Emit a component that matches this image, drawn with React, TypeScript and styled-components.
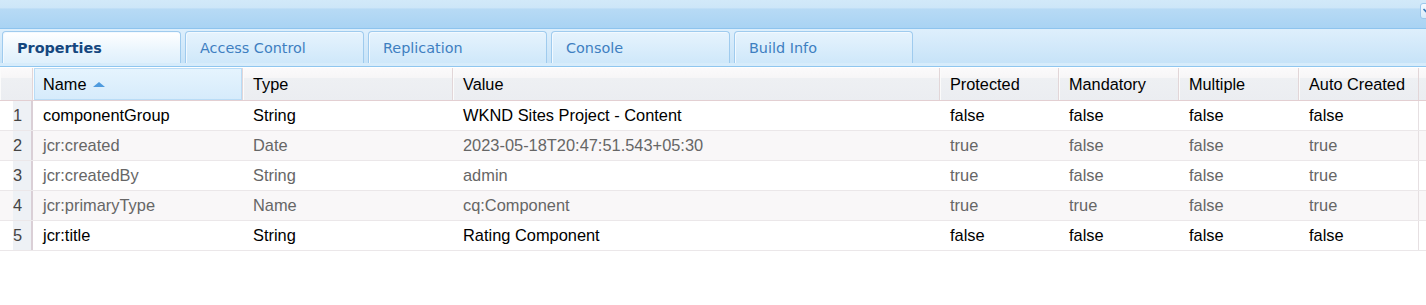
import React from "react";
import styled, { createGlobalStyle } from "styled-components";

const GlobalStyle = createGlobalStyle`
  body {
    margin: 0;
    background: #fff;
    font-family: "Liberation Sans", Arial, sans-serif;
  }
`;

type Row = {
  name: string;
  type: string;
  value: string;
  protectedV: string;
  mandatory: string;
  multiple: string;
  autoCreated: string;
  isProtected: boolean;
};

const rows: Row[] = [
  { name: "componentGroup", type: "String", value: "WKND Sites Project - Content", protectedV: "false", mandatory: "false", multiple: "false", autoCreated: "false", isProtected: false },
  { name: "jcr:created", type: "Date", value: "2023-05-18T20:47:51.543+05:30", protectedV: "true", mandatory: "false", multiple: "false", autoCreated: "true", isProtected: true },
  { name: "jcr:createdBy", type: "String", value: "admin", protectedV: "true", mandatory: "false", multiple: "false", autoCreated: "true", isProtected: true },
  { name: "jcr:primaryType", type: "Name", value: "cq:Component", protectedV: "true", mandatory: "true", multiple: "false", autoCreated: "true", isProtected: true },
  { name: "jcr:title", type: "String", value: "Rating Component", protectedV: "false", mandatory: "false", multiple: "false", autoCreated: "false", isProtected: false },
];

const tabs = ["Properties", "Access Control", "Replication", "Console", "Build Info"];

const columns = [
  { label: "Name", width: 210, sorted: true },
  { label: "Type", width: 210 },
  { label: "Value", width: 487 },
  { label: "Protected", width: 119 },
  { label: "Mandatory", width: 120 },
  { label: "Multiple", width: 120 },
  { label: "Auto Created", width: 120 },
];

const gridCols = `33px ${columns.map((c) => c.width + "px").join(" ")} 1fr`;

export default function App() {
  return (
    <>
      <GlobalStyle />
      <Panel>
        <TopBar>
          <CollapseBtn>
            <svg width="10" height="10" viewBox="0 0 10 10">
              <path d="M1.5 3 L4.5 6 L7.5 3" stroke="#3b78b8" strokeWidth="1.6" fill="none" />
            </svg>
          </CollapseBtn>
        </TopBar>
        <TabStrip>
          {tabs.map((t, i) => (
            <Tab key={t} active={i === 0}>
              {t}
            </Tab>
          ))}
        </TabStrip>
        <Grid>
          <HeaderRow style={{ gridTemplateColumns: gridCols }}>
            <HeadCell />
            {columns.map((c) => (
              <HeadCell key={c.label} sorted={!!c.sorted}>
                {c.label}
                {c.sorted && <SortArrow />}
              </HeadCell>
            ))}
            <HeadFiller />
          </HeaderRow>
          {rows.map((r, i) => (
            <DataRow key={r.name} alt={i % 2 === 1} style={{ gridTemplateColumns: gridCols }}>
              <NumCell>{i + 1}</NumCell>
              {[r.name, r.type, r.value, r.protectedV, r.mandatory, r.multiple, r.autoCreated].map((v, j) => (
                <Cell key={j} muted={r.isProtected}>
                  {v}
                </Cell>
              ))}
              <Filler />
            </DataRow>
          ))}
        </Grid>
      </Panel>
    </>
  );
}

const Panel = styled.div`
  width: 1426px;
  background: #fff;
`;

const TopBar = styled.div`
  position: relative;
  height: 28px;
  background: linear-gradient(to bottom, #d2e9f9 0%, #cde6f8 28%, #b7daf5 32%, #a9d3f3 100%);
  border-bottom: 1px solid #8ec4ee;
`;

const CollapseBtn = styled.div`
  position: absolute;
  right: -8px;
  top: 3px;
  width: 14px;
  height: 16px;
  border: 1px solid #9cc8ec;
  border-radius: 3px;
  background: linear-gradient(to bottom, #f4faff, #d6ebfa);
  display: flex;
  align-items: center;
  padding-left: 1px;
  box-sizing: border-box;
`;

const TabStrip = styled.div`
  display: flex;
  gap: 4px;
  height: 37px;
  padding: 2px 0 0 2px;
  box-sizing: border-box;
  background: linear-gradient(to bottom, #deeffc, #c7e3f8);
  border-bottom: 3px solid #d7ecfb;
  box-shadow: 0 1px 0 #8fc6ef;
  margin-bottom: 2px;
`;

const Tab = styled.div<{ active: boolean }>`
  width: 179px;
  box-sizing: border-box;
  height: 32px;
  padding: 8px 0 0 14px;
  border: 1px solid #9fcbee;
  border-bottom: none;
  border-radius: 4px 4px 0 0;
  box-shadow: inset 1px 1px 0 #f2f9ff;
  font-family: "DejaVu Sans", Verdana, sans-serif;
  font-size: 14.4px;
  font-weight: ${(p) => (p.active ? 700 : 400)};
  color: ${(p) => (p.active ? "#15477f" : "#3e7fc1")};
  background: ${(p) =>
    p.active
      ? "linear-gradient(to bottom, #ffffff, #eaf5fd 60%, #dff0fc)"
      : "linear-gradient(to bottom, #e6f3fd, #cfe8fa)"};
`;

const Grid = styled.div`
  display: flex;
  flex-direction: column;
`;

const HeaderRow = styled.div`
  display: grid;
  height: 33px;
  border-bottom: 1px solid #e3cfd2;
  box-sizing: border-box;
`;

const HeadCell = styled.div<{ sorted?: boolean }>`
  display: flex;
  align-items: center;
  padding-left: 9px;
  font-size: 16.3px;
  color: #000;
  border-right: 1px solid #e2d6d8;
  border-left: 1px solid #fbfbfb;
  background: ${(p) =>
    p.sorted
      ? "linear-gradient(to bottom, #e6f4fe, #d6ebfb)"
      : "linear-gradient(to bottom, #fbfafb 0%, #f7f6f7 30%, #eef0f3 32%, #ebedf1 100%)"};
  ${(p) => (p.sorted ? "box-shadow: inset 0 0 0 1px #b9dcf6;" : "")}
`;

const HeadFiller = styled.div`
  background: linear-gradient(to bottom, #fbfafb 0%, #f7f6f7 30%, #eef0f3 32%, #ebedf1 100%);
`;

const SortArrow = styled.span`
  margin-left: 7px;
  width: 0;
  height: 0;
  border-left: 6px solid transparent;
  border-right: 6px solid transparent;
  border-bottom: 5px solid #4f9bde;
`;

const DataRow = styled.div<{ alt: boolean }>`
  display: grid;
  height: 30px;
  box-sizing: border-box;
  border-bottom: 1px solid #ebe7e9;
  background: ${(p) => (p.alt ? "#f9f7f8" : "#fff")};
`;

const NumCell = styled.div`
  margin-left: 13px;
  background: #eef1f5;
  border-right: 2px solid #dacfd6;
  display: flex;
  align-items: center;
  justify-content: flex-end;
  padding-right: 9px;
  font-size: 16.4px;
  color: #444;
`;

const Cell = styled.div<{ muted: boolean }>`
  display: flex;
  align-items: center;
  padding-left: 10px;
  font-size: 16.4px;
  color: ${(p) => (p.muted ? "#666" : "#000")};
  white-space: nowrap;
  overflow: hidden;
`;

const Filler = styled.div`
  border-left: 1px solid #e6e0e2;
  width: 0;
  margin-left: -1px;
  background: #fff;
`;
